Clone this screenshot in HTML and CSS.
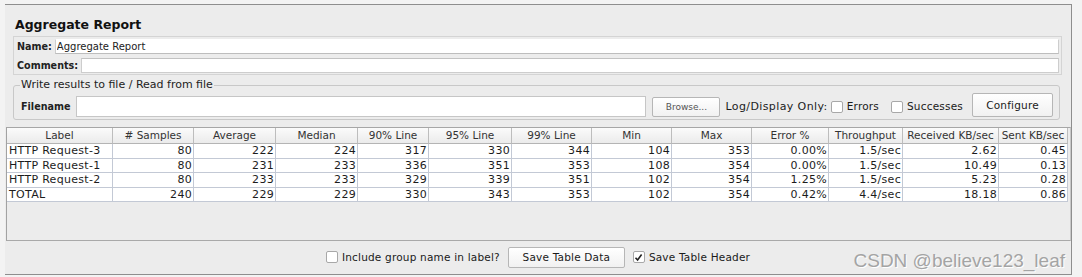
FILE: index.html
```html
<!DOCTYPE html>
<html lang="en">
<head>
    <meta charset="UTF-8">
    <title>Aggregate Report</title>
    <link rel="stylesheet" href="styles.css">
</head>
<body>
    <div class="frame">
        <h1 class="title">Aggregate Report</h1>

        <div class="namebox">
            <div class="field-row">
                <span class="lbl">Name:</span>
                <input class="text name-input" type="text" value="Aggregate Report">
            </div>
            <div class="field-row">
                <span class="lbl">Comments:</span>
                <input class="text" type="text" value="">
            </div>
        </div>

        <fieldset class="filebox">
            <legend>Write results to file / Read from file</legend>
            <div class="file-row">
                <span class="lbl row-text">Filename</span>
                <input class="text file-input" type="text" value="">
                <button class="btn btn-browse">Browse...</button>
                <span class="row-text log-label">Log/Display Only:</span>
                <label class="check row-text"><span class="box"></span>Errors</label>
                <label class="check row-text"><span class="box"></span>Successes</label>
                <button class="btn btn-configure">Configure</button>
            </div>
        </fieldset>

        <div class="table-pane">
            <table class="report">
                <colgroup>
                    <col style="width: 106px">
                    <col style="width: 81px">
                    <col style="width: 82px">
                    <col style="width: 82px">
                    <col style="width: 71px">
                    <col style="width: 83px">
                    <col style="width: 80px">
                    <col style="width: 80px">
                    <col style="width: 80px">
                    <col style="width: 77px">
                    <col style="width: 74px">
                    <col style="width: 96px">
                    <col style="width: 69px">
                </colgroup>
                <thead>
                    <tr>
                        <th>Label</th>
                        <th># Samples</th>
                        <th>Average</th>
                        <th>Median</th>
                        <th>90% Line</th>
                        <th>95% Line</th>
                        <th>99% Line</th>
                        <th>Min</th>
                        <th>Max</th>
                        <th>Error %</th>
                        <th>Throughput</th>
                        <th>Received KB/sec</th>
                        <th>Sent KB/sec</th>
                    </tr>
                </thead>
                <tbody>
                    <tr>
                        <td class="name">HTTP Request-3</td>
                        <td>80</td><td>222</td><td>224</td><td>317</td><td>330</td><td>344</td>
                        <td>104</td><td>353</td><td>0.00%</td><td>1.5/sec</td><td>2.62</td><td>0.45</td>
                    </tr>
                    <tr>
                        <td class="name">HTTP Request-1</td>
                        <td>80</td><td>231</td><td>233</td><td>336</td><td>351</td><td>353</td>
                        <td>108</td><td>354</td><td>0.00%</td><td>1.5/sec</td><td>10.49</td><td>0.13</td>
                    </tr>
                    <tr>
                        <td class="name">HTTP Request-2</td>
                        <td>80</td><td>233</td><td>233</td><td>329</td><td>339</td><td>351</td>
                        <td>102</td><td>354</td><td>1.25%</td><td>1.5/sec</td><td>5.23</td><td>0.28</td>
                    </tr>
                    <tr>
                        <td class="name">TOTAL</td>
                        <td>240</td><td>229</td><td>229</td><td>330</td><td>343</td><td>353</td>
                        <td>102</td><td>354</td><td>0.42%</td><td>4.4/sec</td><td>18.18</td><td>0.86</td>
                    </tr>
                </tbody>
            </table>
        </div>

        <div class="bottom-bar">
            <label class="check"><span class="box"></span>Include group name in label?</label>
            <button class="btn btn-save">Save Table Data</button>
            <label class="check">
                <span class="box checked">
                    <svg width="9" height="9" viewBox="0 0 9 9"><path d="M1.5 4.8 L3.6 7 L7.6 1.6" fill="none" stroke="#222" stroke-width="1.6"/></svg>
                </span>Save Table Header
            </label>
        </div>

        <div class="watermark">CSDN @believe123_leaf</div>
    </div>
</body>
</html>
```

FILE: styles.css
```css
* {
    box-sizing: border-box;
}

body {
    margin: 0;
    background: #f3f3f3;
    font-family: "DejaVu Sans", "Noto Sans", sans-serif;
    font-size: 11px;
    color: #1c1c1c;
}

.frame {
    position: relative;
    margin: 4px 0 0 5px;
    width: 1067px;
    height: 271px;
    background: #ececec;
    border: 1px solid #8e8e8e;
    border-left: none;
    display: flex;
    flex-direction: column;
}

.title {
    margin: 12px 0 3px 10px;
    font-size: 12.5px;
    line-height: 16px;
    font-weight: bold;
    color: #111;
}

.lbl {
    font-size: 9.6px;
    font-weight: bold;
    color: #222;
}

/* name / comments */
.namebox {
    margin: 0 9px 0 8px;
    border: 1px solid #d4d4d4;
    padding: 2px 2px 1px 3px;
    display: flex;
    flex-direction: column;
    gap: 4px;
}

.field-row {
    display: flex;
    align-items: center;
    gap: 3px;
}

.text {
    flex: 1;
    height: 15px;
    margin: 0;
    padding: 0 1px;
    border: 1px solid #cdcdcd;
    border-top-color: #c2c2c2;
    background: #fff;
    font-family: inherit;
    font-size: 10px;
    color: #222;
    outline: none;
}

.name-input {
    border-top-color: #fff;
    border-bottom-color: #bdbdbd;
}

/* file section */
.filebox {
    margin: 4px 11px 0 8px;
    padding: 1px 6px 2px 7px;
    border: 1px solid #c8c8c8;
    border-radius: 3px;
    min-width: 0;
}

.filebox legend {
    margin-left: -1px;
    padding: 0 1px;
    font-size: 11px;
    line-height: 12px;
    color: #222;
}

.file-row {
    display: flex;
    align-items: flex-end;
    height: 25px;
}

.row-text {
    line-height: 21px;
}

.file-input {
    height: 21px;
    margin-left: 6px;
    border-color: #c6c6c6;
}

.log-label {
    margin-left: 5px;
    letter-spacing: 0.4px;
}

.check {
    display: flex;
    align-items: center;
    font-size: 10.5px;
    letter-spacing: 0.2px;
    color: #1a1a1a;
}

.file-row .check {
    margin-left: 3px;
}

.file-row .check + .check {
    margin-left: 12px;
}

.box {
    display: inline-flex;
    align-items: center;
    justify-content: center;
    width: 12px;
    height: 12px;
    margin-right: 4px;
    border: 1px solid #a8a8a8;
    border-radius: 2px;
    background: #fff;
}

.btn {
    margin: 0;
    padding: 0;
    border: 1px solid #b6b6b6;
    border-radius: 2px;
    background: linear-gradient(#ffffff, #f1f1f1);
    font-family: inherit;
    font-size: 10.5px;
    letter-spacing: 0.2px;
    color: #1a1a1a;
}

.btn-browse {
    width: 68px;
    height: 20px;
    margin-left: 6px;
    font-size: 9px;
    letter-spacing: 0;
    color: #555;
}

.btn-configure {
    width: 81px;
    height: 24px;
    margin-left: 9px;
}

/* results table */
.table-pane {
    margin: 7px 0 0 1px;
    height: 114px;
    border-left: 1px solid #a2a2a2;
    border-top: 1px solid #a6a6a6;
    border-bottom: 1px solid #a9a9a9;
    border-right: 1px solid #c8c8c8;
    background: #ececec;
}

.report {
    width: 1061px;
    table-layout: fixed;
    border-collapse: separate;
    border-spacing: 0;
}

.report th {
    height: 16px;
    padding: 0;
    border-right: 1px solid #bdbdbd;
    border-bottom: 1px solid #b4b4b4;
    background: linear-gradient(#fbfbfb, #ebebeb);
    font-size: 10.5px;
    font-weight: normal;
    color: #333;
    text-align: center;
    line-height: 15px;
}

.report td {
    height: 14.5px;
    padding: 0 1px 0 0;
    border-right: 1px solid #c3c9d5;
    border-bottom: 1px solid #c3c9d5;
    background: #fff;
    font-size: 11px;
    letter-spacing: 0.3px;
    line-height: 13.5px;
    text-align: right;
    white-space: nowrap;
    overflow: hidden;
}

.report td.name {
    padding-left: 2px;
    text-align: left;
}

/* bottom controls */
.bottom-bar {
    flex: 1;
    display: flex;
    align-items: center;
    justify-content: center;
    padding-bottom: 1px;
}

.btn-save {
    width: 117px;
    height: 21px;
    margin: 0 8px 0 8px;
}

.watermark {
    position: absolute;
    right: 6px;
    bottom: 4px;
    font-family: "Liberation Sans", Arial, sans-serif;
    font-size: 19px;
    line-height: 19px;
    color: #a4a4a4;
    text-shadow: 1px 1px 0 #ffffff;
}
```
